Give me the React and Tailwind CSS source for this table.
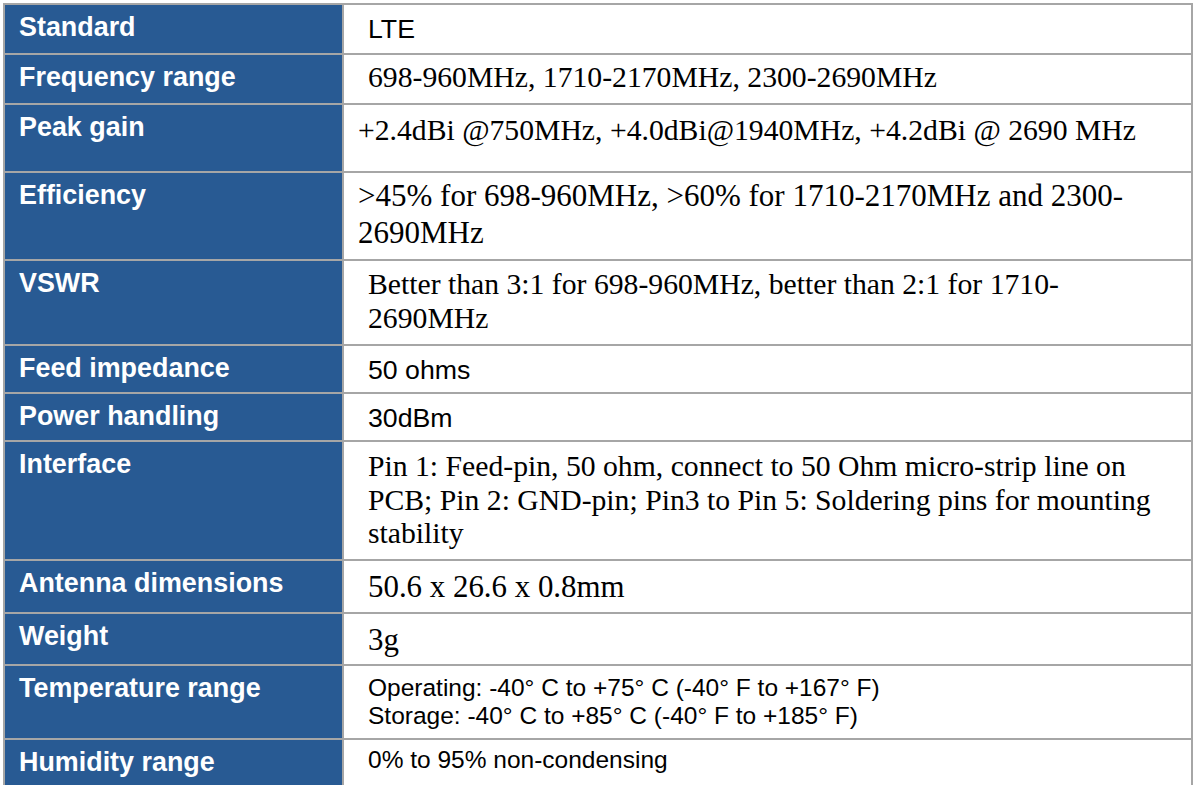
import React from 'react';

const sans = "font-['Liberation_Sans',Arial,sans-serif]";
const serif = "font-['Liberation_Serif','Times_New_Roman',serif]";

const rows = [
  {
    label: 'Standard',
    h: 'h-[48px]',
    cell: `${sans} text-[26.7px] leading-[32px] pt-[8px] pl-[24px]`,
    lines: ['LTE'],
  },
  {
    label: 'Frequency range',
    h: 'h-[50px]',
    cell: `${serif} text-[29.7px] leading-[34px] pt-[5px] pl-[24px]`,
    lines: ['698-960MHz, 1710-2170MHz, 2300-2690MHz'],
  },
  {
    label: 'Peak gain',
    h: 'h-[68px]',
    cell: `${serif} text-[29.7px] leading-[34px] pt-[8px] pl-[14px]`,
    lines: ['+2.4dBi @750MHz, +4.0dBi@1940MHz, +4.2dBi @ 2690 MHz'],
  },
  {
    label: 'Efficiency',
    h: 'h-[88px]',
    cell: `${serif} text-[31px] leading-[36.5px] pt-[5px] pl-[14px]`,
    lines: ['>45% for 698-960MHz, >60% for 1710-2170MHz and 2300-', '2690MHz'],
  },
  {
    label: 'VSWR',
    h: 'h-[85px]',
    cell: `${serif} text-[29.7px] leading-[33.5px] pt-[7px] pl-[24px]`,
    lines: ['Better than 3:1 for 698-960MHz, better than 2:1 for 1710-', '2690MHz'],
  },
  {
    label: 'Feed impedance',
    h: 'h-[48px]',
    cell: `${sans} text-[26.7px] leading-[32px] pt-[8px] pl-[24px]`,
    lines: ['50 ohms'],
  },
  {
    label: 'Power handling',
    h: 'h-[48px]',
    cell: `${sans} text-[26.7px] leading-[32px] pt-[8px] pl-[24px]`,
    lines: ['30dBm'],
  },
  {
    label: 'Interface',
    h: 'h-[119px]',
    cell: `${serif} text-[29.7px] leading-[33.5px] pt-[8px] pl-[24px]`,
    lines: [
      'Pin 1: Feed-pin, 50 ohm, connect to 50 Ohm micro-strip line on',
      'PCB; Pin 2: GND-pin; Pin3 to Pin 5: Soldering pins for mounting',
      'stability',
    ],
  },
  {
    label: 'Antenna dimensions',
    h: 'h-[53px]',
    cell: `${serif} text-[30.9px] leading-[34px] pt-[9px] pl-[24px]`,
    lines: ['50.6 x 26.6 x 0.8mm'],
  },
  {
    label: 'Weight',
    h: 'h-[52px]',
    cell: `${serif} text-[30.9px] leading-[34px] pt-[9px] pl-[24px]`,
    lines: ['3g'],
  },
  {
    label: 'Temperature range',
    h: 'h-[74px]',
    cell: `${sans} text-[24.5px] leading-[28px] pt-[8px] pl-[24px]`,
    lines: [
      'Operating: -40° C to +75° C (-40° F to +167° F)',
      'Storage: -40° C to +85° C (-40° F to +185° F)',
    ],
  },
  {
    label: 'Humidity range',
    h: 'h-[47px]',
    cell: `${sans} text-[24.5px] leading-[28px] pt-[6px] pl-[24px]`,
    lines: ['0% to 95% non-condensing'],
  },
];

export default function App() {
  return (
    <div className="w-[1195px] h-[785px] bg-white pl-[3px] pt-[3px]">
      <div className="w-[1190px] border-2 border-[#a6a6a6] bg-white">
        {rows.map((row, i) => (
          <div
            key={row.label}
            className={`flex ${row.h} ${i > 0 ? 'border-t-2 border-[#a6a6a6]' : ''}`}
          >
            {/* label */}
            <div className="w-[337px] shrink-0 bg-[#285a93] pl-[14px] pt-[6px]">
              <span className={`${sans} text-[26.9px] leading-[32px] font-bold text-white whitespace-nowrap`}>
                {row.label}
              </span>
            </div>
            <div className="w-[2px] shrink-0 bg-[#a6a6a6]" />
            {/* value */}
            <div className={`flex-1 text-black whitespace-nowrap ${row.cell}`}>
              {row.lines.map((line) => (
                <div key={line}>{line}</div>
              ))}
            </div>
          </div>
        ))}
      </div>
    </div>
  );
}
